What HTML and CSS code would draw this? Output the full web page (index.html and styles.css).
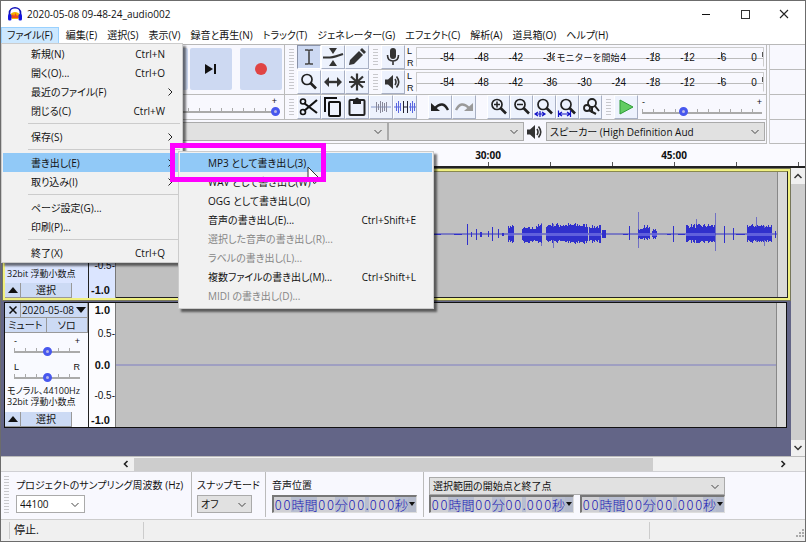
FILE: index.html
```html
<!DOCTYPE html>
<html lang="ja">
<head>
<meta charset="utf-8">
<title>2020-05-08 09-48-24_audio002</title>
<link rel="stylesheet" href="styles.css">
</head>
<body>
<svg class="defs" aria-hidden="true">
  <symbol id="chev-down" viewBox="0 0 8 8"><path d="M0.5 2L4 5.5L7.5 2" fill="none" stroke="#444"/></symbol>
  <symbol id="chev-right" viewBox="0 0 8 8"><path d="M2.5 0.5L6 4L2.5 7.5" fill="none" stroke="#222"/></symbol>
  <symbol id="mag" viewBox="0 0 22 22"><circle cx="9" cy="8.500" r="5" fill="none" stroke="#222" stroke-width="1.700"/><path d="M12.500 12L18 17.500" stroke="#222" stroke-width="2.600"/></symbol>
  <symbol id="speaker" viewBox="0 0 18 18"><path d="M1 6.500H4L9 2V16L4 11.500H1Z" fill="#333"/><path d="M11 6Q13 9 11 12M12.500 3.500Q17 9 12.500 14.500" fill="none" stroke="#333" stroke-width="1.600"/></symbol>
</svg>
<div class="window">
  <header class="titlebar">
    <svg class="logo" width="16" height="16" viewBox="0 0 16 16"><path d="M3 9C5 5 11 5 13 9L11 13H5Z" fill="#f6b300"/><path d="M4.500 10L6 8L7 10L8.500 7L10 10L11.500 9V12H4.500Z" fill="#ee4a20"/><path d="M2.500 9V7C2.500 0 13.500 0 13.500 7V9" fill="none" stroke="#1010b8" stroke-width="1.700"/><rect x="1" y="8" width="3.500" height="6.500" rx="1.500" fill="#1414e0"/><rect x="11.500" y="8" width="3.500" height="6.500" rx="1.500" fill="#1414e0"/></svg>
    <span class="title">2020-05-08 09-48-24_audio002</span>
    <button class="win" aria-label="最小化"><svg width="10" height="10"><path d="M1 5.500H9" stroke="#111"/></svg></button>
    <button class="win" aria-label="最大化"><svg width="10" height="10"><rect x="1.500" y="1.500" width="8" height="8" fill="none" stroke="#333"/></svg></button>
    <button class="win" aria-label="閉じる"><svg width="10" height="10"><path d="M1 1L9 9M9 1L1 9" stroke="#222" stroke-width="1.100"/></svg></button>
  </header>
  <nav class="menubar">
    <button class="open">ファイル(F)</button><button>編集(E)</button><button>選択(S)</button><button>表示(V)</button><button>録音と再生(N)</button><button>トラック(T)</button><button>ジェネレーター(G)</button><button>エフェクト(C)</button><button>解析(A)</button><button>道具箱(O)</button><button>ヘルプ(H)</button>
  </nav>

  <section class="toolbars">
    <div class="bars">
      <div class="row tall">
        <div class="transport">
          <button aria-label="先頭へ"></button>
          <button aria-label="末尾へ"><svg width="14" height="14"><path d="M1 2L9 7L1 12Z" fill="#111"/><path d="M11 2V12" stroke="#111" stroke-width="2"/></svg></button>
          <button class="rec" aria-label="録音"><svg width="14" height="14"><circle cx="7" cy="7" r="6" fill="#e04444"/></svg></button>
        </div>
        <i class="grip"></i>
        <div class="tools">
          <button class="on" aria-label="選択ツール"><svg width="22" height="22"><path d="M7 4H10L11 5L12 4H15M11 4V18M7 18H10L11 17L12 18H15" fill="none" stroke="#444" stroke-width="1.600"/></svg></button>
          <button aria-label="エンベロープツール"><svg width="22" height="22"><path d="M7 2H15L11 8ZM7 20H15L11 14Z" fill="#333"/><path d="M1 11.500H8Q13 11 21 8" fill="none" stroke="#333" stroke-width="2"/></svg></button>
          <button aria-label="ドローツール"><svg width="22" height="22"><path d="M3 19L4 14L13 5L17 9L8 18Z" fill="#333"/><path d="M14 4L16 2L20 6L18 8Z" fill="#333"/></svg></button>
          <button aria-label="ズームツール"><svg width="22" height="22"><use href="#mag"/></svg></button>
          <button aria-label="タイムシフトツール"><svg width="22" height="22"><path d="M2 11L7 6V16ZM20 11L15 6V16Z" fill="#333"/><path d="M5 11H17" stroke="#333" stroke-width="2.400"/></svg></button>
          <button aria-label="マルチツール"><svg width="22" height="22"><path d="M11 2.500V19.500M3 11H19M5 5.500L17 16.500M17 5.500L5 16.500" stroke="#333" stroke-width="2.200"/></svg></button>
        </div>
        <div class="meters">
          <div class="meter"><i class="grip"></i>
            <button aria-label="録音レベル"><svg width="22" height="22"><rect x="8" y="2" width="6" height="11" rx="3" fill="#333"/><path d="M5.500 9Q5.500 15 11 15T16.500 9M11 15V19" fill="none" stroke="#333" stroke-width="1.600"/></svg></button>
            <span class="lr"><b>L</b><b>R</b></span>
            <div class="scale"><span>-54</span><span>-48</span><span>-42</span><span>-36</span><span></span><span>-24</span><span>-18</span><span>-12</span><span>-6</span><span>0</span><em>モニターを開始</em></div>
          </div>
          <div class="meter"><i class="grip"></i>
            <button aria-label="再生レベル"><svg width="18" height="18"><use href="#speaker"/></svg></button>
            <span class="lr"><b>L</b><b>R</b></span>
            <div class="scale"><span>-54</span><span>-48</span><span>-42</span><span>-36</span><span>-30</span><span>-24</span><span>-18</span><span>-12</span><span>-6</span><span>0</span></div>
          </div>
        </div>
      </div>

      <div class="row edit">
        <div class="mixer"><span class="slider"><span class="ends"><b></b><b>+</b></span><input type="range" aria-label="再生音量" value="100"></span></div>
        <i class="grip"></i>
        <div class="btns">
          <button aria-label="切り取り"><svg width="22" height="22"><path d="M6 7L19 17M6 15L19 4" stroke="#111" stroke-width="2.200"/><circle cx="5" cy="5.500" r="2.500" fill="none" stroke="#111" stroke-width="1.600"/><circle cx="5" cy="16" r="2.500" fill="none" stroke="#111" stroke-width="1.600"/></svg></button>
          <button aria-label="コピー"><svg width="22" height="22"><path d="M3 16V2H15" fill="none" stroke="#111" stroke-width="2"/><rect x="7" y="6" width="11" height="14" rx="1" fill="none" stroke="#111" stroke-width="2"/></svg></button>
          <button aria-label="貼り付け"><svg width="22" height="22"><rect x="3.500" y="4" width="15" height="15" rx="1" fill="none" stroke="#222" stroke-width="2"/><path d="M7 3H9Q11 0 13 3H15V8H7Z" fill="#222"/></svg></button>
          <button aria-label="トリム"><svg width="22" height="22"><path d="M1 11H21" stroke="#8898c8"/><path d="M6.500 6V16M8.500 8V14M10.500 5V17M12.500 6V16M14.500 7V15M16.500 6V16" stroke="#889"/></svg></button>
          <button aria-label="無音化"><svg width="22" height="22"><path d="M0 11H7M15 11H22M2.500 7V15M4.500 5V17M6.500 7V15M16.500 7V15M18.500 5V17M20.500 7V15" stroke="#5966df"/><path d="M9.500 5V17M13.500 5V17M10 11H13" stroke="#223"/></svg></button>
        </div>
        <div class="btns">
          <button aria-label="元に戻す"><svg width="22" height="22"><path d="M6 12Q14 4 19 14" fill="none" stroke="#222" stroke-width="2.400"/><path d="M2 7V15H11Z" fill="#222"/></svg></button>
          <button aria-label="やり直し"><svg width="22" height="22"><path d="M16 12Q8 4 3 14" fill="none" stroke="#999" stroke-width="2.400"/><path d="M20 7V15H11Z" fill="#999"/></svg></button>
        </div>
        <div class="btns zoom">
          <button aria-label="拡大"><svg width="22" height="22"><use href="#mag"/><path d="M6 8.500H12M9 5.500V11.500" stroke="#222" stroke-width="1.500"/></svg></button>
          <button aria-label="縮小"><svg width="22" height="22"><use href="#mag"/><path d="M6 8.500H12" stroke="#222" stroke-width="1.500"/></svg></button>
          <button aria-label="選択範囲を表示"><svg width="22" height="22"><use href="#mag"/><path d="M1 18H11M4 16L1 18L4 20M8 16L11 18L8 20M6 15V21" fill="none" stroke="#1414c8" stroke-width="1.200"/></svg></button>
          <button aria-label="プロジェクト全体"><svg width="22" height="22"><use href="#mag"/><path d="M1.500 14.500V21M13.500 14.500V21M2 18H13M5 16L2 18L5 20M10 16L13 18L10 20" fill="none" stroke="#1414c8" stroke-width="1.200"/></svg></button>
          <button aria-label="ズーム切替"><svg width="22" height="22"><circle cx="12" cy="7" r="4" fill="none" stroke="#222" stroke-width="1.800"/><circle cx="7" cy="12" r="3" fill="none" stroke="#222" stroke-width="1.800"/><path d="M15 10L19 15M9.500 14.500L16 18M12 11V17" stroke="#222" stroke-width="2"/></svg></button>
        </div>
        <i class="grip"></i>
        <div class="btns play"><button aria-label="再生"><svg width="22" height="22"><path d="M5 4L18 11L5 18Z" fill="#62cc62" stroke="#2b9b35"/></svg></button></div>
        <span class="slider speed"><span class="ends"><b>-</b><b>+</b></span><input type="range" aria-label="再生速度" value="33"></span>
      </div>

      <div class="row device">
        <span class="combo rec-dev"><select aria-label="録音デバイス"><option></option></select><svg width="8" height="8"><use href="#chev-down"/></svg></span>
        <span class="combo chan"><select aria-label="録音チャンネル"><option></option></select><svg width="8" height="8"><use href="#chev-down"/></svg></span>
        <svg class="spk" width="18" height="18"><use href="#speaker"/></svg>
        <span class="combo play-dev"><select aria-label="再生デバイス"><option>スピーカー (High Definition Aud</option></select><svg width="8" height="8"><use href="#chev-down"/></svg></span>
      </div>
    </div>
    <div class="spare"><i></i><i></i><i></i><i></i></div>
  </section>

  <div class="timeline"><span></span><span></span><span></span><span>15:00</span><span></span><span></span><span>30:00</span><span></span><span></span><span>45:00</span><span></span><span></span></div>

  <main class="workspace">
    <div class="tracks">
      <article class="track selected">
        <div class="panel">
          <p class="info">32bit 浮動小数点</p>
          <div class="pair foot"><button aria-label="折りたたむ"><svg width="10" height="6"><path d="M0 6L5 0L10 6Z" fill="#111"/></svg></button><button>選択</button></div>
        </div>
        <div class="vruler"><b>1.0</b><span>0.5-</span><b>0.0</b><span>-0.5-</span><b>-1.0</b></div>
        <div class="wave"><svg id="wave" viewBox="0 0 661 126" preserveAspectRatio="none" shape-rendering="crispEdges"></svg></div>
      </article>
      <article class="track">
        <div class="panel">
          <div class="pair head"><button aria-label="閉じる"><svg width="8" height="8"><path d="M0.500 0.500L7.500 7.500M7.500 0.500L0.500 7.500" stroke="#111" stroke-width="1.500"/></svg></button><button>2020-05-08<svg width="10" height="6"><path d="M0 0H10L5 6Z" fill="#111"/></svg></button></div>
          <div class="pair half"><button>ミュート</button><button>ソロ</button></div>
          <span class="slider"><span class="ends"><b>-</b><b>+</b></span><input type="range" aria-label="音量"></span>
          <span class="slider"><span class="ends"><b>L</b><b>R</b></span><input type="range" aria-label="パン"></span>
          <p class="info">モノラル、44100Hz<br>32bit 浮動小数点</p>
          <div class="pair foot"><button aria-label="折りたたむ"><svg width="10" height="6"><path d="M0 6L5 0L10 6Z" fill="#111"/></svg></button><button>選択</button></div>
        </div>
        <div class="vruler"><b>1.0</b><span>0.5-</span><b>0.0</b><span>-0.5-</span><b>-1.0</b></div>
        <div class="wave"><svg viewBox="0 0 661 124" preserveAspectRatio="none" shape-rendering="crispEdges"><path d="M0 62H661" stroke="#8080c4"/></svg></div>
      </article>
    </div>
    <div class="vscroll"><svg width="8" height="8"><path d="M0.500 6L4 2.500L7.500 6" fill="none" stroke="#333" stroke-width="1.500"/></svg><i></i><svg width="8" height="8"><path d="M0.500 2L4 5.500L7.500 2" fill="none" stroke="#333" stroke-width="1.500"/></svg></div>
  </main>
  <div class="hscroll"><svg width="8" height="8"><path d="M5.500 1L2.500 4L5.500 7" fill="none" stroke="#222" stroke-width="1.600"/></svg><div class="rail"><i></i></div><svg width="8" height="8"><path d="M2.500 1L5.500 4L2.500 7" fill="none" stroke="#222" stroke-width="1.600"/></svg></div>

  <section class="selection">
    <i class="grip"></i>
    <div class="field rate"><label for="rate">プロジェクトのサンプリング周波数 (Hz)</label><span class="combo"><select id="rate"><option>44100</option></select><svg width="8" height="8"><use href="#chev-down"/></svg></span></div>
    <div class="field snap"><label for="snap">スナップモード</label><span class="combo"><select id="snap"><option>オフ</option></select><svg width="8" height="8"><use href="#chev-down"/></svg></span></div>
    <div class="field pos"><span class="cap">音声位置</span><div class="time"></div></div>
    <div class="field range"><span class="combo"><select aria-label="選択範囲"><option>選択範囲の開始点と終了点</option></select><svg width="8" height="8"><use href="#chev-down"/></svg></span><div class="times"><div class="time"></div><div class="time"></div></div></div>
  </section>
  <footer class="status"><span class="nub"></span><span class="state">停止.</span><span class="msg"></span><span class="tail"><svg width="10" height="10"><path d="M7 1H9M4 4H6M7 4H9M1 7H3M4 7H6M7 7H9" stroke="#aaa" stroke-width="2"/></svg></span></footer>
</div>

<div class="menu file-menu">
  <button>新規(N)<kbd>Ctrl+N</kbd></button>
  <button>開く(O)...<kbd>Ctrl+O</kbd></button>
  <button>最近のファイル(F)<svg width="8" height="8"><use href="#chev-right"/></svg></button>
  <button>閉じる(C)<kbd>Ctrl+W</kbd></button>
  <hr>
  <button>保存(S)<svg width="8" height="8"><use href="#chev-right"/></svg></button>
  <hr>
  <button class="hot">書き出し(E)<svg width="8" height="8"><use href="#chev-right"/></svg></button>
  <button>取り込み(I)<svg width="8" height="8"><use href="#chev-right"/></svg></button>
  <hr>
  <button>ページ設定(G)...</button>
  <button>印刷(P)...</button>
  <hr>
  <button>終了(X)<kbd>Ctrl+Q</kbd></button>
</div>
<div class="menu sub-menu">
  <button class="hot">MP3 として書き出し(3)</button>
  <button>WAV として書き出し(W)</button>
  <button>OGG として書き出し(O)</button>
  <button>音声の書き出し(E)...<kbd>Ctrl+Shift+E</kbd></button>
  <button disabled>選択した音声の書き出し(R)...</button>
  <button disabled>ラベルの書き出し(L)...</button>
  <button>複数ファイルの書き出し(M)...<kbd>Ctrl+Shift+L</kbd></button>
  <button disabled>MIDI の書き出し(D)...</button>
</div>
<svg class="cursor" width="13" height="19" viewBox="0 0 13 19"><path d="M1 1V15L4.500 12L7 17.500L9 16.500L7 11.500H11.500Z" fill="#fff" stroke="#333"/></svg>
<div class="callout"></div>
<script src="app.js"></script>
</body>
</html>
```
FILE: styles.css
```css
* { box-sizing: border-box; }
body { margin: 0; font: 10px/16px "Open Sans", "Noto Sans CJK JP", sans-serif; font-feature-settings: "palt"; color: #111; }
button, select, input { font: inherit; color: inherit; margin: 0; padding: 0; border: 0; font-feature-settings: inherit; }
button { background: none; white-space: nowrap; }
svg { display: block; flex: none; }
p { margin: 0; }
.defs { position: absolute; width: 0; height: 0; }
.window { display: flex; flex-direction: column; min-height: 100vh; border: 1px solid #6c6c6c; background: #f8f8fe; }

.titlebar { display: flex; align-items: center; height: 26px; padding: 0 2px 0 6px; background: #fff; }
.title { flex: 1; margin-left: 4px; }
.win { width: 39px; height: 26px; display: grid; place-items: center; }
.menubar { display: flex; height: 17px; background: #fff; }
.menubar button { padding: 0 5px; line-height: 15px; }
.menubar .open { background: #cce8ff; border: 1px solid #99d1ff; margin-right: 2px; }

.toolbars { display: flex; border-top: 1px solid #b8b8b8; }
.bars { flex: 1; min-width: 0; border-right: 1px solid #bbb; }
.spare { width: 36px; margin-left: 2px; border-left: 1px solid #ccc; display: flex; flex-direction: column; }
.spare i { height: 25px; border-bottom: 1px solid #bbb; }
.spare i:last-child { height: 24px; }
.row { display: flex; align-items: center; border-bottom: 1px solid #bbb; }
.tall { height: 50px; }
.grip { flex: none; width: 5px; align-self: stretch; margin: 4px 3px 4px 4px; background: repeating-linear-gradient(#c8c8cc 0 1px, transparent 1px 3px); }
.transport { display: flex; justify-content: flex-end; align-self: stretch; gap: 2px; width: 284px; padding: 3px 2px 0 0; border-right: 1px solid #bbb; }
.transport button { width: 42px; height: 42px; border-radius: 2px; background: #cdd9f2; display: grid; place-items: center; }
.transport .rec { margin-left: 6px; }
.tools { display: grid; grid-template-columns: repeat(3, 24px); align-self: stretch; }
.tools button, .meter button, .btns button { display: grid; place-items: center; background: #edf2fd; border: 1px solid; border-color: #fff #a8b0c4 #a8b0c4 #fff; width: 24px; height: 24px; }
.tools .on { background: #cdd9f2; border-color: #8992a8 #fff #fff #8992a8; }
.meters { flex: 1; align-self: stretch; min-width: 0; }
.meter { display: flex; align-items: center; height: 25px; border-bottom: 1px solid #bbb; }
.meter:last-child { height: 24px; border: 0; }
.lr { width: 9px; display: flex; flex-direction: column; padding-left: 2px; }
.lr b { font: 9px/12px "Liberation Sans", sans-serif; }
.scale { position: relative; flex: 1; display: flex; height: 20px; padding-left: 13px; margin: 0 2px; border: 1px solid #ccc; border-color: #ccc #ccc transparent; background: linear-gradient(#bbb, #bbb) 0 10px / 100% 1px no-repeat; }
.scale span { flex: 1; text-align: center; font: 10px/20px "Liberation Sans", sans-serif; background: linear-gradient(#555, #555) 50% 4px / 1px 5px no-repeat; }
.scale span:nth-child(10) { flex: 0 0 24px; padding-left: 6px; background-position-x: 100%; }
.scale em { position: absolute; left: 40%; top: 3px; padding: 0 1px; background: #f8f8fe; font: 9px/14px "Noto Sans CJK JP", sans-serif; }

.edit { height: 25px; }
.mixer { width: 284px; border-right: 1px solid #bbb; padding-right: 4px; align-self: stretch; }
.btns { display: flex; margin-right: 11px; }
.zoom button { width: 23px; }
.zoom { margin-right: 0; }
.play { margin-right: 4px; }
.slider { display: block; }
.ends { display: flex; justify-content: space-between; font: 9px/9px "Liberation Sans", sans-serif; }
.ends b { height: 9px; font-weight: normal; }
.slider input { appearance: none; display: block; width: 100%; height: 10px; background: linear-gradient(#aaa, #aaa) 0 5px / 100% 2px no-repeat, repeating-linear-gradient(90deg, #aaa 0 1px, transparent 1px 11px) 0 2px / 100% 4px no-repeat; }
.slider input::-webkit-slider-thumb { appearance: none; width: 9px; height: 9px; border: 3px solid #4858ee; border-radius: 50%; background: #b8b8e8; }
.mixer .slider { padding-top: 2px; }
.mixer .ends { padding-right: 3px; }
.speed { flex: 1; margin-right: 4px; }

.device { height: 24px; }
.combo { position: relative; display: block; height: 19px; border: 1px solid #aaa; background: #e1e1e1; }
.combo select { appearance: none; display: block; width: 100%; height: 100%; padding: 0 16px 0 3px; background: none; }
.combo svg { position: absolute; right: 5px; top: 5px; pointer-events: none; }
.rec-dev { width: 387px; }
.chan { width: 136px; }
.spk { margin: 0 2px; }
.play-dev { flex: 1; margin-right: 1px; }

.timeline { display: grid; grid-template-columns: 116px repeat(10, 62px) 1fr; height: 24px; border-bottom: 2px solid #222; background: #fafaff; overflow: hidden; }
.timeline span { font: bold 10px/22px "Open Sans", sans-serif; width: 62px; text-align: center; background: linear-gradient(#555, #555) 50% 100% / 1px 4px no-repeat; margin-left: 30px; }

.workspace { flex: 1; display: flex; background: #636587; }
.tracks { flex: 1; padding-left: 1px; min-width: 0; }
.track { display: flex; height: 126px; margin: 1px 4px 0 2px; border: 1px solid #111; }
.track.selected { height: 133px; margin: 0; border: 3px solid #f0f080; outline: 1px solid #77775a; outline-offset: -1px; }
.panel { display: flex; flex-direction: column; width: 84px; border-right: 1px solid #222; background: #f9faff; }
.selected .panel, .selected .vruler { background: #dbe5ff; }
.pair { display: flex; }
.pair button { background: #ccdaf4; height: 15px; line-height: 14px; border-bottom: 1px solid #999; border-right: 1px solid #999; display: flex; align-items: center; justify-content: center; gap: 2px; }
.head button:first-child, .foot button:first-child { width: 16px; }
.head button:last-child { flex: 1; }
.half button { flex: 1; }
.foot { margin-top: auto; }
.foot button:last-child { width: 51px; }
.panel .slider { padding: 4px 8px 3px 9px; }
.info { padding-left: 2px; font-size: 9px; line-height: 11px; white-space: nowrap; }
.selected .info { margin-top: auto; }
.selected .foot { margin-top: 4px; }
.vruler { display: grid; grid-template-rows: 14px 34px 28px 34px 14px; align-content: center; align-items: center; width: 27px; text-align: right; font: 10px/14px "Liberation Sans", sans-serif; background: #fcfcff; border-right: 1px solid #777; }
.vruler b { padding-right: 5px; font-size: 11px; }
.wave { flex: 1; min-width: 0; display: flex; background: #d9d9d9; padding-right: 9px; }
.wave svg { flex: 1; width: 100%; min-width: 0; height: 100%; background: #c0c0c0; border-right: 1px solid #888; }
.selected .wave { border: 1px solid #222; border-width: 1px 1px 1px 0; border-top-color: #88884e; }
.vscroll { width: 14px; display: flex; flex-direction: column; align-items: center; gap: 4px; padding: 4px 0; background: #f0f0f0; }
.vscroll i { width: 14px; flex: 1; background: #cdcdcd; }
.hscroll { display: flex; align-items: center; height: 16px; border-bottom: 1px solid #d0d0d4; border-top: 1px solid #bbb; background: #f0f0f0; padding: 0 18px 0 121px; }
.rail { flex: 1; height: 13px; margin: 0 4px; }
.rail i { display: block; width: 81%; height: 100%; background: #cdcdcd; }

.selection { display: flex; height: 48px; padding-bottom: 2px; border-bottom: 1px solid #ccc; }
.selection .grip { margin: 4px 7px 4px 3px; }
.field { display: grid; grid-template-rows: 17px 18px; gap: 1px; align-content: center; }
.field label, .cap { white-space: nowrap; }
.field .combo { height: 18px; }
.rate { width: 175px; }
.rate .combo { width: 69px; background: #fff; }
.snap { width: 74px; padding: 0 5px; border-left: 1px solid #bbb; }
.snap .combo { width: 55px; }
.pos { width: 158px; padding-left: 6px; border-left: 1px solid #bbb; }
.range { width: 302px; padding-left: 5px; border-left: 1px solid #bbb; }
.times { display: flex; justify-content: space-between; }
.time { display: flex; align-items: center; width: 145px; height: 18px; border: 1px solid #999; border-color: #777 #ddd #ddd #777; border-width: 2px 1px 1px 2px; background: #d0d0d4; font: 300 13px/15px "Noto Sans CJK JP", sans-serif; color: #1818b4; }
.time span { width: 9px; text-align: center; }
.time .unit { width: 13px; background: #b8bed0; }
.time .dot { width: 4px; background: #b8bed0; }
.time svg { margin-left: auto; background: #b4bacb; }

.status { display: flex; align-items: center; height: 21px; background: #f0f0f0; }
.status span { height: 17px; }
.nub { width: 9px; border-right: 1px solid #ccc; }
.state { width: 134px; padding-left: 4px; border-right: 1px solid #ccc; font-size: 11px; }
.msg { flex: 1; border-right: 1px solid #ccc; }
.tail { width: 155px; display: flex; justify-content: flex-end; align-items: flex-end; }

.menu { position: absolute; display: flex; flex-direction: column; padding: 2px 1px; background: #f1f1f1; border: 1px solid #ccc; box-shadow: 3px 3px 2px #0008; }
.file-menu { left: 1px; top: 43px; width: 182px; padding: 0 1px; }
.sub-menu { left: 178px; top: 151px; width: 256px; padding: 1px 1px 3px; }
.menu button { display: flex; align-items: center; justify-content: space-between; height: 19px; padding: 0 16px 0 28px; text-align: left; }
.menu button svg { margin-right: -9px; }
.menu .hot { background: #91c9f7; }
.menu button:disabled { color: #868686; }
.menu kbd { font: inherit; }
.menu hr { width: 152px; height: 1px; margin: 3px 0 3px 25px; border: 0; background: #ccc; }
.cursor { position: absolute; left: 307px; top: 166px; }
.callout { position: absolute; left: 170px; top: 143px; width: 156px; height: 39px; border: 5px solid #f0f; }
```
FILE: app.js
```js
// Bursts of sound: [start, end, peak above, peak below]
const bursts = [
  [317, 324, 1, 1], [338, 345, 1, 1], [351, 352, 11, 11], [355, 356, 3, 3], [360, 361, 6, 6], [364, 366, 3, 3],
  [372, 373, 4, 3], [376, 377, 8, 7], [382, 383, 6, 4], [386, 388, 2, 2],
  [392, 397, 10, 9], [406, 419, 8, 9], [420, 425, 11, 9], [430, 457, 12, 9],
  [457, 471, 12, 10], [473, 484, 10, 9], [486, 489, 5, 4], [507, 511, 1, 1], [513, 514, 9, 6],
  [522, 526, 7, 6], [527, 533, 10, 6], [536, 540, 6, 5], [551, 554, 1, 1], [557, 558, 9, 8],
  [562, 568, 1, 1], [570, 598, 11, 9], [608, 609, 9, 9], [617, 618, 7, 6], [620, 628, 1, 1], [631, 655, 11, 9], [659, 660, 4, 4]
];
// Isolated peaks: [x, above, below]
const peaks = [[425, 12, 12], [522, 23, 14], [580, 16, 8], [599, 22, 17], [640, 18, 8], [648, 9, 12], [437, 11, 14]];
let seed = 7;
const rand = () => (seed = (seed * 16807) % 2147483647) / 2147483647;
let body = "", core = "";
for (const [a, b, up, down] of bursts) {
  const narrow = b - a < 3;
  for (let x = a; x < b + (narrow ? 0 : 1); x++) {
    const k = narrow ? 1 : 0.65 + 0.35 * rand();
    const u = Math.round(up * k), d = Math.round(down * k);
    body += `M${x} ${63 - u}h1V${63 + d}h-1Z`;
    if (up > 5 && !narrow) core += `M${x} 61h1v4h-1Z`;
  }
}
const spikes = peaks.map(([x, u, d]) => `M${x} ${63 - u}h1V${63 + d}h-1Z`).join("");
document.getElementById("wave").innerHTML =
  `<path d="${spikes}" fill="#7070c4"/><path d="M0 62.5H661" stroke="#3434c4"/>` +
  `<path d="${body}" fill="#3030cc"/><path d="${core}" fill="#6060dc"/>`;

// Time fields: digits and units sit in cells of their own
for (const box of document.querySelectorAll(".time")) {
  box.innerHTML = [..."00時間00分00.000秒"].map(c =>
    `<span class="${c === "0" ? "digit" : c === "." ? "dot" : "unit"}">${c}</span>`).join("") +
    '<svg width="8" height="15"><path d="M1 5H7L4 9Z" fill="#111"/></svg>';
}
```
